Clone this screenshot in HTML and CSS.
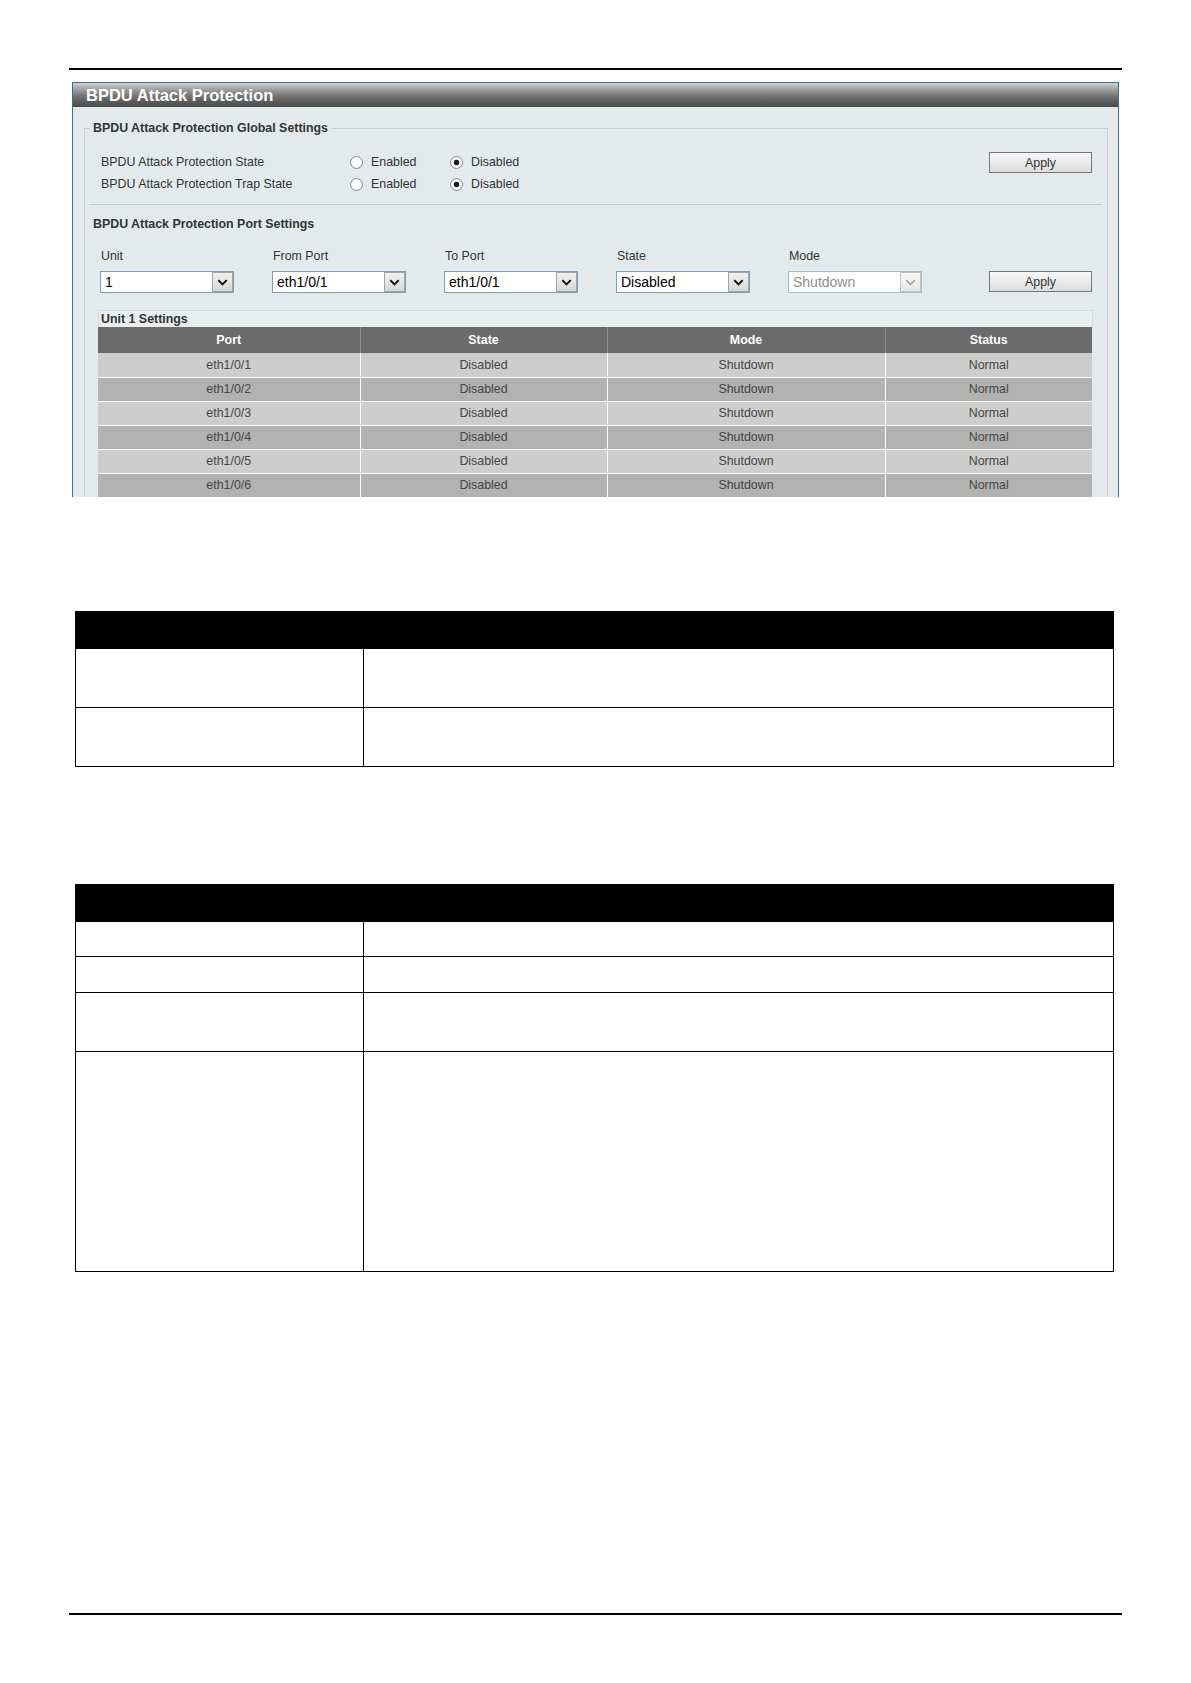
FILE: index.html
```html
<!DOCTYPE html>
<html lang="en">
<head>
<meta charset="utf-8">
<title>BPDU Attack Protection</title>
<link rel="stylesheet" href="styles.css">
</head>
<body>
<div class="page">
  <div class="rule rule-top"></div>

  <div class="panel">
    <div class="panel-title">BPDU Attack Protection</div>
    <div class="panel-body">
      <fieldset class="group">
        <legend class="group-legend">BPDU Attack Protection Global Settings</legend>
        <div class="global">
          <div class="global-rows">
            <div class="opt-row">
              <span class="opt-label">BPDU Attack Protection State</span>
              <span class="radio"><span class="radio-dot"></span>Enabled</span>
              <span class="radio"><span class="radio-dot checked"></span>Disabled</span>
            </div>
            <div class="opt-row">
              <span class="opt-label">BPDU Attack Protection Trap State</span>
              <span class="radio"><span class="radio-dot"></span>Enabled</span>
              <span class="radio"><span class="radio-dot checked"></span>Disabled</span>
            </div>
          </div>
          <button class="btn btn-global" type="button">Apply</button>
        </div>
        <div class="sep"></div>
        <div class="sub-heading">BPDU Attack Protection Port Settings</div>
        <div class="port-form">
          <div class="field">
            <div class="field-label">Unit</div>
            <div class="select"><span class="select-text">1</span><span class="select-btn"><svg class="chev" viewBox="0 0 12 8" width="11" height="7"><polyline points="1.2,1.2 6,6.2 10.8,1.2"/></svg></span></div>
          </div>
          <div class="field">
            <div class="field-label">From Port</div>
            <div class="select"><span class="select-text">eth1/0/1</span><span class="select-btn"><svg class="chev" viewBox="0 0 12 8" width="11" height="7"><polyline points="1.2,1.2 6,6.2 10.8,1.2"/></svg></span></div>
          </div>
          <div class="field">
            <div class="field-label">To Port</div>
            <div class="select"><span class="select-text">eth1/0/1</span><span class="select-btn"><svg class="chev" viewBox="0 0 12 8" width="11" height="7"><polyline points="1.2,1.2 6,6.2 10.8,1.2"/></svg></span></div>
          </div>
          <div class="field">
            <div class="field-label">State</div>
            <div class="select"><span class="select-text">Disabled</span><span class="select-btn"><svg class="chev" viewBox="0 0 12 8" width="11" height="7"><polyline points="1.2,1.2 6,6.2 10.8,1.2"/></svg></span></div>
          </div>
          <div class="field">
            <div class="field-label">Mode</div>
            <div class="select select-disabled"><span class="select-text">Shutdown</span><span class="select-btn"><svg class="chev" viewBox="0 0 12 8" width="11" height="7"><polyline points="1.2,1.2 6,6.2 10.8,1.2"/></svg></span></div>
          </div>
          <button class="btn btn-port" type="button">Apply</button>
        </div>
        <div class="unit-bar">Unit 1 Settings</div>
        <table class="ports">
          <colgroup>
            <col class="c-port"><col class="c-state"><col class="c-mode"><col class="c-status">
          </colgroup>
          <thead>
            <tr><th>Port</th><th>State</th><th>Mode</th><th>Status</th></tr>
          </thead>
          <tbody>
            <tr><td>eth1/0/1</td><td>Disabled</td><td>Shutdown</td><td>Normal</td></tr>
            <tr><td>eth1/0/2</td><td>Disabled</td><td>Shutdown</td><td>Normal</td></tr>
            <tr><td>eth1/0/3</td><td>Disabled</td><td>Shutdown</td><td>Normal</td></tr>
            <tr><td>eth1/0/4</td><td>Disabled</td><td>Shutdown</td><td>Normal</td></tr>
            <tr><td>eth1/0/5</td><td>Disabled</td><td>Shutdown</td><td>Normal</td></tr>
            <tr><td>eth1/0/6</td><td>Disabled</td><td>Shutdown</td><td>Normal</td></tr>
          </tbody>
        </table>
      </fieldset>
    </div>
  </div>

  <table class="doc-table doc-table-1">
    <colgroup><col class="d-c1"><col class="d-c2"></colgroup>
    <thead><tr class="d-head"><th></th><th></th></tr></thead>
    <tbody>
      <tr class="r59"><td></td><td></td></tr>
      <tr class="r59"><td></td><td></td></tr>
    </tbody>
  </table>

  <table class="doc-table doc-table-2">
    <colgroup><col class="d-c1"><col class="d-c2"></colgroup>
    <thead><tr class="d-head"><th></th><th></th></tr></thead>
    <tbody>
      <tr class="r35"><td></td><td></td></tr>
      <tr class="r36"><td></td><td></td></tr>
      <tr class="r59"><td></td><td></td></tr>
      <tr class="r220"><td></td><td></td></tr>
    </tbody>
  </table>

  <div class="rule rule-bottom"></div>
</div>
</body>
</html>
```

FILE: styles.css
```css
* { box-sizing: border-box; }

body {
  margin: 0;
  background: #ffffff;
  font-family: "Liberation Sans", Arial, sans-serif;
  color: #333333;
}

.page {
  width: 1191px;
  padding-bottom: 60px;
}

.rule {
  height: 2px;
  width: 1053px;
  margin-left: 69px;
  background: #000000;
}
.rule-top { margin-top: 68px; }
.rule-bottom { margin-top: 341px; }

/* ---------- UI panel ---------- */
.panel {
  margin: 12px 0 0 72px;
  width: 1047px;
  height: 415px;
  overflow: hidden;
  border: 1px solid #3d6e8e;
  border-bottom: none;
  background: #e4eaec;
}

.panel-title {
  height: 24px;
  line-height: 24px;
  padding-left: 13px;
  font-size: 16.5px;
  font-weight: bold;
  color: #ffffff;
  background: linear-gradient(#d2d2d2 0%, #a8a8a8 22%, #7a7a7a 50%, #5b5b5b 78%, #4b4b4b 100%);
}

.panel-body {
  padding-top: 14px;
}

.group {
  margin: 0 10px 0 11px;
  padding: 0;
  min-width: 0;
  border: 1px solid #c8d0d3;
  height: 600px;
}

.group-legend {
  margin-left: 5px;
  padding: 0 3px;
  font-size: 12.4px;
  font-weight: bold;
  line-height: 14px;
  color: #333333;
}

.global {
  display: flex;
  align-items: flex-start;
  margin-top: 16px;
  padding: 0 15px 0 16px;
}

.global-rows { flex: 1; }

.opt-row {
  display: flex;
  align-items: center;
  height: 22px;
  font-size: 12.4px;
}

.opt-label { width: 249px; }

.radio {
  display: flex;
  align-items: center;
  width: 100px;
}

.radio-dot {
  width: 13px;
  height: 13px;
  margin-right: 8px;
  border-radius: 50%;
  border: 1px solid #8c8c8c;
  background: radial-gradient(circle at 50% 45%, #ffffff 45%, #e4e4e4 100%);
}

.radio-dot.checked {
  background: radial-gradient(circle at 50% 50%, #1c1c1c 0, #1c1c1c 2.4px, #ffffff 3.2px, #ffffff 55%, #e4e4e4 100%);
}

.btn {
  width: 103px;
  height: 21px;
  padding: 0;
  border: 1px solid #767676;
  background: linear-gradient(#f8f8f8, #dcdcdc);
  font-family: "Liberation Sans", Arial, sans-serif;
  font-size: 12.4px;
  color: #333333;
}

.btn-global { margin-top: 1px; }

.sep {
  height: 1px;
  margin: 9px 5px 0 4px;
  background: #c3cbce;
}

.sub-heading {
  margin: 12px 0 0 8px;
  font-size: 12.4px;
  font-weight: bold;
  line-height: 14px;
}

.port-form {
  display: flex;
  align-items: flex-end;
  margin-top: 18px;
  padding: 0 15px;
}

.field { width: 172px; }

.field-label {
  padding-left: 1px;
  font-size: 12.4px;
  line-height: 14px;
}

.select {
  display: flex;
  align-items: center;
  justify-content: space-between;
  width: 134px;
  height: 22px;
  margin-top: 8px;
  padding-left: 4px;
  border: 1px solid #7f9db9;
  background: #ffffff;
  font-size: 14px;
  color: #000000;
}

.select-btn {
  display: flex;
  align-items: center;
  justify-content: center;
  width: 21px;
  height: 20px;
  border: 1px solid #a3a3a3;
  background: linear-gradient(#f2f2f2, #d6d6d6);
}

.chev polyline {
  fill: none;
  stroke: #111111;
  stroke-width: 2.2;
}

.select-disabled {
  border-color: #a7bccd;
  color: #8e8e8e;
}
.select-disabled .chev polyline { stroke: #9a9a9a; stroke-width: 1.6; }
.select-disabled .select-btn { border-color: #c2c2c2; background: linear-gradient(#f7f7f7, #e6e6e6); }

.btn-port {
  margin-left: auto;
  margin-bottom: 1px;
}

.unit-bar {
  height: 17px;
  margin: 17px 14px 0 13px;
  padding-left: 2px;
  border: 1px solid #d3dadc;
  border-bottom: none;
  background: #e8eef0;
  font-size: 12.4px;
  font-weight: bold;
  line-height: 16px;
  color: #333333;
}

.ports {
  width: 994px;
  margin: 0 14px 0 13px;
  border-collapse: collapse;
  table-layout: fixed;
  font-size: 12.4px;
}

.c-port { width: 262px; }
.c-state { width: 247px; }
.c-mode { width: 278px; }
.c-status { width: 207px; }

.ports th {
  height: 26px;
  padding: 0;
  background: #6b6b6b;
  color: #ffffff;
  font-weight: bold;
  border-left: 1px solid #8e8e8e;
}

.ports td {
  height: 24px;
  padding: 0;
  text-align: center;
  color: #464646;
  border-left: 1px solid #ffffff;
  border-bottom: 1px solid #ffffff;
}

.ports th:first-child,
.ports td:first-child { border-left: none; }

.ports tbody tr:nth-child(odd) td { background: #cdcdcd; }
.ports tbody tr:nth-child(even) td { background: #b2b2b2; }

/* ---------- document tables ---------- */
.doc-table {
  width: 1038px;
  margin-left: 75px;
  border-collapse: collapse;
  table-layout: fixed;
}
.doc-table-1 { margin-top: 114px; }
.doc-table-2 { margin-top: 117px; }

.d-c1 { width: 288px; }
.d-c2 { width: 750px; }

.doc-table th {
  height: 37px;
  padding: 0;
  background: #000000;
  border: 1px solid #000000;
}

.doc-table td {
  padding: 0;
  border: 1px solid #000000;
}

.r35 td { height: 35px; }
.r36 td { height: 36px; }
.r59 td { height: 59px; }
.r220 td { height: 220px; }
```
